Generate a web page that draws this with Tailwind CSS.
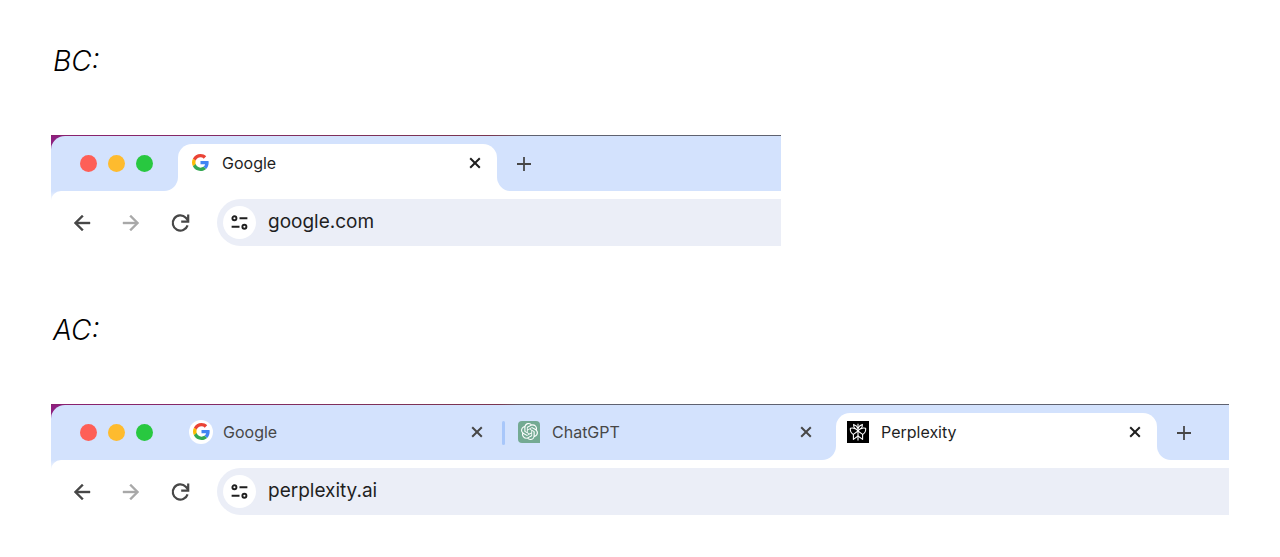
<!DOCTYPE html>
<html lang="en">
<head>
    <meta charset="UTF-8">
    <meta name="viewport" content="width=device-width, initial-scale=1.0">
    <title>BC / AC</title>
    <script src="https://cdn.jsdelivr.net/npm/@tailwindcss/browser@4"></script>
</head>
<body class="min-h-screen bg-white font-['Inter','Liberation_Sans',sans-serif]">
    <!-- Shared icons -->
    <svg class="hidden">
        <symbol id="google" viewBox="0 0 48 48">
            <path fill="#ea4335" d="M24 9.5c3.54 0 6.71 1.22 9.21 3.6l6.85-6.85C35.9 2.38 30.47 0 24 0 14.62 0 6.51 5.38 2.56 13.22l7.98 6.19C12.43 13.72 17.74 9.5 24 9.5z"/>
            <path fill="#4285f4" d="M46.98 24.55c0-1.57-.15-3.09-.38-4.55H24v9.02h12.94c-.58 2.96-2.26 5.48-4.78 7.18l7.73 6c4.51-4.18 7.09-10.36 7.09-17.65z"/>
            <path fill="#fbbc05" d="M10.53 28.59c-.48-1.45-.76-2.99-.76-4.59s.27-3.14.76-4.59l-7.98-6.19C.92 16.46 0 20.12 0 24s.92 7.54 2.56 10.78l7.97-6.19z"/>
            <path fill="#34a853" d="M24 48c6.48 0 11.93-2.13 15.89-5.81l-7.73-6c-2.15 1.45-4.92 2.3-8.16 2.3-6.26 0-11.57-4.22-13.47-9.91l-7.98 6.19C6.51 42.62 14.62 48 24 48z"/>
        </symbol>
        <symbol id="chatgpt" viewBox="0 0 24 24">
            <path d="M22.2819 9.8211a5.9847 5.9847 0 0 0-.5157-4.9108 6.0462 6.0462 0 0 0-6.5098-2.9A6.0651 6.0651 0 0 0 4.9807 4.1818a5.9847 5.9847 0 0 0-3.9977 2.9 6.0462 6.0462 0 0 0 .7427 7.0966 5.98 5.98 0 0 0 .511 4.9107 6.051 6.051 0 0 0 6.5146 2.9001A5.9847 5.9847 0 0 0 13.2599 24a6.0557 6.0557 0 0 0 5.7718-4.2058 5.9894 5.9894 0 0 0 3.9977-2.9001 6.0557 6.0557 0 0 0-.7475-7.0729zm-9.022 12.6081a4.4755 4.4755 0 0 1-2.8764-1.0408l.1419-.0804 4.7783-2.7582a.7948.7948 0 0 0 .3927-.6813v-6.7369l2.02 1.1686a.071.071 0 0 1 .038.052v5.5826a4.504 4.504 0 0 1-4.4945 4.4944zm-9.6607-4.1254a4.4708 4.4708 0 0 1-.5346-3.0137l.142.0852 4.783 2.7582a.7712.7712 0 0 0 .7806 0l5.8428-3.3685v2.3324a.0804.0804 0 0 1-.0332.0615L9.74 19.9502a4.4992 4.4992 0 0 1-6.1408-1.6464zM2.3408 7.8956a4.485 4.485 0 0 1 2.3655-1.9728V11.6a.7664.7664 0 0 0 .3879.6765l5.8144 3.3543-2.0201 1.1685a.0757.0757 0 0 1-.071 0l-4.8303-2.7865A4.504 4.504 0 0 1 2.3408 7.872zm16.5963 3.8558L13.1038 8.364 15.1192 7.2a.0757.0757 0 0 1 .071 0l4.8303 2.7913a4.4944 4.4944 0 0 1-.6765 8.1042v-5.6772a.79.79 0 0 0-.407-.667zm2.0107-3.0231l-.142-.0852-4.7735-2.7818a.7759.7759 0 0 0-.7854 0L9.409 9.2297V6.8974a.0662.0662 0 0 1 .0284-.0615l4.8303-2.7866a4.4992 4.4992 0 0 1 6.6802 4.66zM8.3065 12.863l-2.02-1.1638a.0804.0804 0 0 1-.038-.0567V6.0742a4.4992 4.4992 0 0 1 7.3757-3.4537l-.142.0805L8.704 5.459a.7948.7948 0 0 0-.3927.6813zm1.0976-2.3654l2.602-1.4998 2.6069 1.4998v2.9994l-2.5974 1.4997-2.6067-1.4997Z"/>
        </symbol>
        <symbol id="perplexity" viewBox="0 0 22 22">
            <g fill="none" stroke="currentColor" stroke-width="1.1" stroke-linejoin="round">
                <path d="M11 2.8v16.6"/>
                <path d="M11 7.6C10.4 5.6 8.8 4.2 6.6 3.4 6.4 5.4 7 7 8.4 8.2M11 7.6c.6-2 2.2-3.4 4.4-4.2.2 2-.4 3.6-1.8 4.8"/>
                <path d="M11 9.8C9.4 7.6 6.6 6.6 3.4 7.2c-.4 2.6.6 5 3 6.2M11 9.8c1.6-2.2 4.4-3.2 7.6-2.6.4 2.6-.6 5-3 6.2"/>
                <path d="M11 10 6.4 13.4v5L11 15l4.6 3.4v-5z"/>
            </g>
        </symbol>
        <symbol id="close" viewBox="0 0 16 16">
            <path d="M3.2 3.2l9.6 9.6M12.8 3.2l-9.6 9.6" fill="none" stroke="currentColor" stroke-width="2"/>
        </symbol>
        <symbol id="plus" viewBox="0 0 22 22">
            <path d="M11 4v14M4 11h14" fill="none" stroke="currentColor" stroke-width="1.8"/>
        </symbol>
        <symbol id="arrow" viewBox="0 0 24 24">
            <path d="M20 11H7.83l5.59-5.59L12 4l-8 8 8 8 1.41-1.41L7.83 13H20v-2z" stroke="currentColor" stroke-width=".4"/>
        </symbol>
        <symbol id="reload" viewBox="0 0 24 24">
            <path d="M19.6 14.4A7.6 7.6 0 1 1 17.8 6.7L20 9.2M20.2 3.6v7h-7" fill="none" stroke="currentColor" stroke-width="2.2"/>
        </symbol>
        <symbol id="tune" viewBox="0 0 24 24">
            <g fill="none" stroke="currentColor" stroke-width="2.2">
                <circle cx="6.2" cy="7.2" r="2.3"/>
                <path d="M12 7.2h9M3 16.8h9"/>
                <circle cx="17.6" cy="16.8" r="2.3"/>
            </g>
        </symbol>
    </svg>

    <main class="px-[51px] pt-[41px] pb-10">
        <section class="mb-16">
            <h2 class="mb-[54px] pl-[2px] text-[28px] leading-10 font-light italic text-black">BC:</h2>

            <div class="w-[62%]">
                <div class="h-px bg-linear-to-r from-[#8a2070] via-[#7a3550] via-60% to-[#5f6270] to-65%"></div>
                <div class="flex h-[55px]">
                    <div class="w-[127px] bg-linear-to-b from-[#8e2080] from-50% to-white to-50%">
                        <div class="flex h-full items-center gap-[11px] rounded-tl-[14px] rounded-br-[14px] bg-[#d3e2fd] pl-[29px]">
                            <span class="size-[17px] rounded-full bg-[#fe5f57]"></span>
                            <span class="size-[17px] rounded-full bg-[#febb2e]"></span>
                            <span class="size-[17px] rounded-full bg-[#28c840]"></span>
                        </div>
                    </div>
                    <div class="w-[319px] bg-[#d3e2fd] pt-2">
                        <div class="flex h-full items-center rounded-t-[14px] bg-white pr-[14px] pb-[10px] pl-[10px] text-[#1f1f1f]">
                            <span class="flex size-6 items-center justify-center"><svg class="size-[17px]"><use href="#google"/></svg></span>
                            <span class="ml-[10px] flex-1 text-base">Google</span>
                            <button aria-label="Close tab"><svg class="size-4"><use href="#close"/></svg></button>
                        </div>
                    </div>
                    <div class="flex flex-1 items-center rounded-bl-[14px] bg-[#d3e2fd] pl-4 text-[#474747]">
                        <button aria-label="New tab"><svg class="size-[22px]"><use href="#plus"/></svg></button>
                    </div>
                </div>
                <div class="bg-linear-to-b from-[#d3e2fd] to-white to-20%">
                    <div class="flex items-center gap-[25px] rounded-tl-[10px] bg-white pt-2 pl-[19px] text-[#474747]">
                        <button aria-label="Back"><svg class="size-6 fill-current"><use href="#arrow"/></svg></button>
                        <button aria-label="Forward" class="text-[#a9a9a9]"><svg class="size-6 rotate-180 fill-current"><use href="#arrow"/></svg></button>
                        <button aria-label="Reload"><svg class="size-6"><use href="#reload"/></svg></button>
                        <div class="flex h-[47px] flex-1 items-center rounded-l-full bg-[#ebeef7] pl-[6px] text-[#1f1f1f]">
                            <button aria-label="Site information" class="flex size-[33px] items-center justify-center rounded-full bg-white"><svg class="size-[21px]"><use href="#tune"/></svg></button>
                            <input type="text" aria-label="Address" value="google.com" class="ml-3 min-w-0 flex-1 bg-transparent text-[19px] outline-none">
                        </div>
                    </div>
                </div>
            </div>
        </section>

        <section>
            <h2 class="mb-[54px] pl-[2px] text-[28px] leading-10 font-light italic text-black">AC:</h2>

            <div>
                <div class="h-px bg-linear-to-r from-[#8a2070] via-[#7a3550] via-38% to-[#5f6270] to-40%"></div>
                <div class="flex h-[55px]">
                    <div class="w-[127px] bg-linear-to-b from-[#8e2080] from-50% to-[#d3e2fd] to-50%">
                        <div class="flex h-full items-center gap-[11px] rounded-tl-[14px] bg-[#d3e2fd] pl-[29px]">
                            <span class="size-[17px] rounded-full bg-[#fe5f57]"></span>
                            <span class="size-[17px] rounded-full bg-[#febb2e]"></span>
                            <span class="size-[17px] rounded-full bg-[#28c840]"></span>
                        </div>
                    </div>
                    <div class="flex w-[324px] items-center bg-[#d3e2fd] pr-[17px] pb-[2px] pl-[11px] text-[#474747]">
                        <span class="flex size-6 items-center justify-center rounded-full bg-white"><svg class="size-[17px]"><use href="#google"/></svg></span>
                        <span class="ml-[10px] flex-1 text-base">Google</span>
                        <button aria-label="Close tab"><svg class="size-4"><use href="#close"/></svg></button>
                    </div>
                    <div class="flex items-center bg-[#d3e2fd]"><span class="h-6 w-[3px] rounded-full bg-[#a8c7fa]"></span></div>
                    <div class="flex w-[331px] items-center rounded-br-[14px] bg-[#d3e2fd] pr-[22px] pb-[2px] pl-3 text-[#474747]">
                        <span class="flex size-6 items-center justify-center">
                            <span class="flex size-[22px] items-center justify-center rounded-[4px] rounded-br-none bg-[#74aa93] text-white"><svg class="size-[17px] fill-current"><use href="#chatgpt"/></svg></span>
                        </span>
                        <span class="ml-[11px] flex-1 text-base">ChatGPT</span>
                        <button aria-label="Close tab"><svg class="size-4"><use href="#close"/></svg></button>
                    </div>
                    <div class="w-[321px] bg-[#d3e2fd] pt-2">
                        <div class="flex h-full items-center rounded-t-[14px] bg-white pr-[14px] pb-[10px] pl-[10px] text-[#1f1f1f]">
                            <span class="flex size-6 items-center justify-center"><svg class="size-[22px] bg-black text-white"><use href="#perplexity"/></svg></span>
                            <span class="ml-[11px] flex-1 text-base">Perplexity</span>
                            <button aria-label="Close tab"><svg class="size-4"><use href="#close"/></svg></button>
                        </div>
                    </div>
                    <div class="flex flex-1 items-center rounded-bl-[14px] bg-[#d3e2fd] pl-4 text-[#474747]">
                        <button aria-label="New tab"><svg class="size-[22px]"><use href="#plus"/></svg></button>
                    </div>
                </div>
                <div class="bg-linear-to-b from-[#d3e2fd] to-white to-20%">
                    <div class="flex items-center gap-[25px] rounded-tl-[10px] bg-white pt-2 pl-[19px] text-[#474747]">
                        <button aria-label="Back"><svg class="size-6 fill-current"><use href="#arrow"/></svg></button>
                        <button aria-label="Forward" class="text-[#a9a9a9]"><svg class="size-6 rotate-180 fill-current"><use href="#arrow"/></svg></button>
                        <button aria-label="Reload"><svg class="size-6"><use href="#reload"/></svg></button>
                        <div class="flex h-[47px] flex-1 items-center rounded-l-full bg-[#ebeef7] pl-[6px] text-[#1f1f1f]">
                            <button aria-label="Site information" class="flex size-[33px] items-center justify-center rounded-full bg-white"><svg class="size-[21px]"><use href="#tune"/></svg></button>
                            <input type="text" aria-label="Address" value="perplexity.ai" class="ml-3 min-w-0 flex-1 bg-transparent text-[19px] outline-none">
                        </div>
                    </div>
                </div>
            </div>
        </section>
    </main>
</body>
</html>
